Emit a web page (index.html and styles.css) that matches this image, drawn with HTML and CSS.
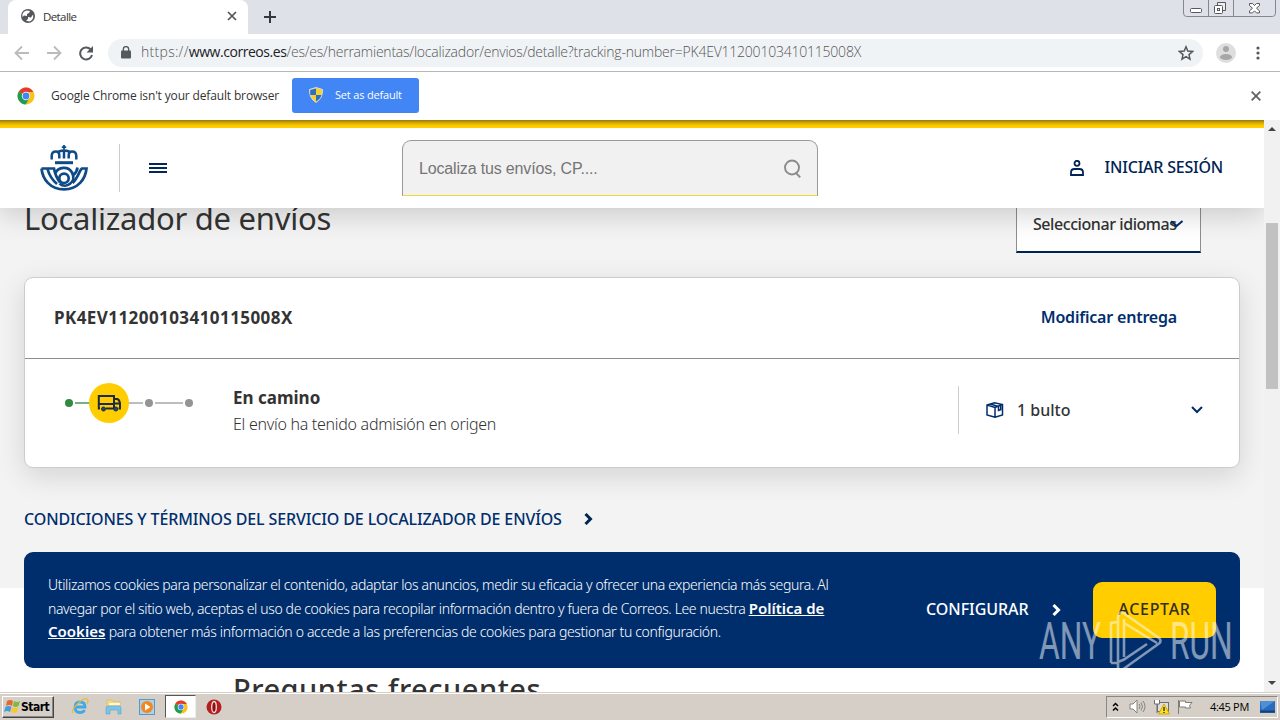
FILE: index.html
```
<!DOCTYPE html>
<html lang="es">
<head>
<meta charset="utf-8">
<title>Detalle</title>
<link rel="stylesheet" href="styles.css">
</head>
<body>
<svg class="defs" width="0" height="0" aria-hidden="true">
  <symbol id="chrome" viewBox="0 0 18 18">
    <circle cx="9" cy="9" r="8.5" fill="#fbc116"/>
    <path d="M9 9 1.7 4.7A8.5 8.5 0 0 1 16.4 5H9z" fill="#e33b2e"/>
    <path d="M9 9 1.7 4.7A8.5 8.5 0 0 0 8.6 17.5L12.6 11z" fill="#1e9e55"/>
    <circle cx="9" cy="9" r="4.2" fill="#fff"/><circle cx="9" cy="9" r="3.4" fill="#4285f4"/>
  </symbol>
</svg>
<div class="screen">
  <div class="tabstrip">
    <div class="tab">
      <svg width="14" height="14" viewBox="0 0 14 14"><circle cx="7" cy="7" r="7" fill="#54575b"/><path d="M6 1.500 9 2 8 4 6 5v2L3 6.500 1.500 8C1 4 3 2 6 1.500zM7 8l3 .5 2-3c1 4-1 6.500-4 7l-3-1 2-1.500z" fill="#fff"/></svg>
      <span class="tab-title">Detalle</span>
      <svg width="10" height="10" viewBox="0 0 10 10"><path d="M1 1l8 8M9 1 1 9" stroke="#505357" stroke-width="1.7"/></svg>
    </div>
    <svg class="newtab" width="12" height="12" viewBox="0 0 12 12"><path d="M6 0v12M0 6h12" stroke="#34373b" stroke-width="2"/></svg>
    <svg class="winctl" width="94" height="18" viewBox="0 0 94 18" fill="none" stroke="#83878f"><path d="M.5 0v13q0 3.500 3 3.500h86q3 0 3-3.500V0M25.500 0v16M50.500 0v16"/><g stroke="#55595f"><rect x="7.500" y="8.500" width="11" height="4" rx="1" fill="#fff"/><path d="M34.500 5V2.500h8v8H40" fill="#eee"/><rect x="31.500" y="5.500" width="8" height="8" rx="1" fill="#fff"/><rect x="34.500" y="8.500" width="2" height="2"/><path d="M66.500 3.500h3l2 2 2-2h3v2l-3 2.700 3 2.700v2h-3l-2-2-2 2h-3v-2l3-2.700-3-2.700z" fill="#fff"/></g></svg>
  </div>
  <div class="toolbar">
    <svg class="nav" width="80" height="16" viewBox="0 0 80 16" fill="none" stroke-width="1.8"><path d="M15 8H1.500M8 1.500 1.500 8 8 14.500M33 8h13.500M40 1.500 46.500 8 40 14.500" stroke="#b9bbbd"/><path d="M76.500 4.200A6 6 0 1 0 78 10" stroke="#55585c" stroke-width="2"/><path d="M79 1v6.500H72.500z" fill="#55585c"/></svg>
    <div class="omnibox">
      <svg width="10" height="13" viewBox="0 0 10 13"><rect x="0" y="4.500" width="10" height="8" rx="1" fill="#55585c"/><path d="M2.300 5V3.300a2.700 2.700 0 0 1 5.400 0V5" fill="none" stroke="#55585c" stroke-width="1.400"/></svg>
      <span class="url"><span class="scheme">https://</span><b>www.correos.es</b><span class="path">/es/es/herramientas/localizador/envios/detalle?tracking-number=PK4EV11200103410115008X</span></span>
      <svg class="star" width="16" height="16" viewBox="0 0 16 16"><path d="M8 1.800l1.800 4.300 4.700.4L11 9.600l1 4.600-4-2.500-4 2.500 1-4.600L1.500 6.500l4.700-.4z" fill="none" stroke="#55585c" stroke-width="1.500"/></svg>
    </div>
    <svg class="avatar" width="20" height="20" viewBox="0 0 20 20"><circle cx="10" cy="10" r="10" fill="#dedede"/><circle cx="10" cy="6" r="3" fill="#a7a7a7"/><ellipse cx="10" cy="14" rx="6" ry="3" fill="#a7a7a7"/></svg>
    <svg class="dots" width="4" height="14" viewBox="0 0 4 14" fill="#55585c"><circle cx="2" cy="2" r="1.600"/><circle cx="2" cy="7" r="1.600"/><circle cx="2" cy="12" r="1.600"/></svg>
  </div>
  <div class="infobar">
    <svg width="18" height="18"><use href="#chrome"/></svg>
    <span class="info-text">Google Chrome isn't your default browser</span>
    <div class="setdef">
      <svg width="14" height="16" viewBox="0 0 14 16"><path d="M7 .5 13.500 2.500Q14 11 7 15.500Q0 11 .5 2.500z" fill="#f8d12f" stroke="#d8dbe0"/><path d="M7 1.500V8H1.300Q1 5 1.300 3zM7 8h5.500Q11 12.500 7 14.500z" fill="#2d6fc4"/></svg>
      <span>Set as default</span>
    </div>
    <svg class="info-x" width="10" height="10" viewBox="0 0 10 10"><path d="M.7.700l8.600 8.600M9.300.700.7 9.300" stroke="#606366" stroke-width="1.800"/></svg>
  </div>
  <div class="viewport">
    <main class="page">
      <header class="header">
        <svg class="logo" width="48" height="46" viewBox="0 0 48 46" fill="none" stroke="#0e4a86"><path d="M24 0v4.500M21.800 2.200h4.400" stroke-width="1.800"/><path d="M11.700 14.500V11q0-4.500 4.300-4.500 3.300 0 3.300 4v3M36.300 14.500V11q0-4.500-4.300-4.500-3.300 0-3.300 4v3M18 8q1-2.500 6-2.500t6 2.500M24 4.500v9" stroke-width="2.500"/><path d="M15 17.700h18" stroke-width="3"/><path d="M1.500 23.500h12.500C15 29 17 33.500 20 37.500M1.500 23.500C2.500 34 10 44.300 24 44.300S45.500 34 46.500 23.500h-4.500C39.500 25 38 33 32.500 38M7.500 24Q10 33 17 39" stroke-width="2.700"/><path d="M15.500 28C18 22 28 20.500 32 27.500 37 37 26 44.500 19.500 38.500M33.500 30Q37 27 37.500 22.500" stroke-width="2.700"/><circle cx="24" cy="33.300" r="4.700" stroke-width="2.700"/></svg>
        <span class="vline"></span>
        <span class="burger"></span>
        <div class="search"><span>Localiza tus envíos, CP....</span><svg width="18" height="20" viewBox="0 0 18 20" fill="none" stroke="#8b8b8b" stroke-width="1.900"><circle cx="8" cy="8.500" r="7"/><path d="M11.500 13.500l4.700 4.800"/></svg></div>
        <div class="login"><svg width="14" height="16" viewBox="0 0 14 16" fill="none" stroke="#002453" stroke-width="1.800"><circle cx="7" cy="3.300" r="2.500"/><path d="M1 15v-2.500q0-3.500 3.500-3.500h5q3.500 0 3.500 3.500V15z"/></svg><span>INICIAR SESIÓN</span></div>
      </header>
      <section class="locator">
        <div class="title-row"><h1>Localizador de envíos</h1><div class="lang"><span>Seleccionar idiomas</span><svg width="14" height="8" viewBox="0 0 14 8"><path d="M1 1.500Q4 3 6.500 6L12.500 1" fill="none" stroke="#002e6d" stroke-width="2"/></svg></div></div>
        <article class="card">
          <div class="card-head"><strong class="code">PK4EV11200103410115008X</strong><span class="modify">Modificar entrega</span></div>
          <div class="card-body">
            <svg class="steps" width="130" height="40" viewBox="0 0 130 40"><path d="M11 20h15" stroke="#72b283" stroke-width="2"/><path d="M64 20h15M91 20h28" stroke="#bdbdbd" stroke-width="2"/><circle cx="5" cy="20" r="4" fill="#2f8b3d"/><circle cx="45" cy="20" r="20" fill="#ffcd00"/><circle cx="85" cy="20" r="4" fill="#949494"/><circle cx="125" cy="20" r="4" fill="#949494"/><g fill="none" stroke="#1c2a42" stroke-width="2"><path d="M36 25.500h-1.200V13H50v12.500H42M50 16h3.500q2 1 2.500 4v5.500h-1.500M50 20.500h6M35 21h15"/></g><circle cx="39.500" cy="26" r="2" fill="#1c4685" stroke="#1c2a42"/><circle cx="51.800" cy="26" r="2" fill="#1c4685" stroke="#1c2a42"/></svg>
            <div class="status"><strong>En camino</strong><span>El envío ha tenido admisión en origen</span></div>
            <div class="parcel"><svg width="18" height="16" viewBox="0 0 18 16" fill="none" stroke="#002e6d" stroke-width="1.500"><path d="M1 3 8.500.8 16.500 2.500v10.500L9 15.200 1 13zM1 3 9 5.500l7.500-3M9 5.500V15M4.500 2 12.500 4.500v4l2.200-.8V4"/></svg><span>1 bulto</span><svg class="chev" width="12" height="8" viewBox="0 0 12 8"><path d="M1 1l5 5 5-5" fill="none" stroke="#002e6d" stroke-width="2"/></svg></div>
          </div>
        </article>
        <a class="terms"><span>CONDICIONES Y TÉRMINOS DEL SERVICIO DE LOCALIZADOR DE ENVÍOS</span><svg width="9" height="12" viewBox="0 0 9 12"><path d="M1.500 1 6.500 6l-5 5" fill="none" stroke="#002453" stroke-width="3"/></svg></a>
      </section>
      <section class="faq"><h2>Preguntas frecuentes</h2></section>
      <aside class="cookies">
        <p><span class="line1">Utilizamos cookies para personalizar el contenido, adaptar los anuncios, medir su eficacia y ofrecer una experiencia más segura. Al</span><br><span class="line2">navegar por el sitio web, aceptas el uso de cookies para recopilar información dentro y fuera de Correos. Lee nuestra <b>Política de</b></span><br><span class="line3"><b>Cookies</b> para obtener más información o accede a las preferencias de cookies para gestionar tu configuración.</span></p>
        <div class="config"><span>CONFIGURAR</span><svg width="9" height="12" viewBox="0 0 9 12"><path d="M1.500 1 6.500 6l-5 5" fill="none" stroke="#fff" stroke-width="3"/></svg></div>
        <div class="accept">ACEPTAR</div>
      </aside>
    </main>
    <div class="scrollbar"><i class="up"></i><i class="thumb"></i><i class="down"></i></div>
    <div class="watermark"><span>ANY</span><svg width="56" height="62" viewBox="0 0 56 62" fill="none" stroke="#fff" stroke-width="2.600"><path d="M10 50V7q0-4 4-6L51 27q3 3 0 5.500L14 59q-4 2-4-3v-5l6-2.500L39 33M3 52V12l7-1M3 52l7 0M16 46V12l33 20M16 12v-4"/></svg><span>RUN</span></div>
  </div>
  <footer class="taskbar">
    <div class="start"><svg width="17" height="16" viewBox="0 0 17 16"><path d="M3 2q3-2 6 0L8 7q-3-2-6 0z" fill="#e8672c"/><path d="M10 2q3 2 6 0l-1.500 5q-3 2-5.500 0z" fill="#7fb943"/><path d="M1.500 8q3-2 6 0L6 13q-3-2-6 0z" fill="#3f9de0"/><path d="M8.500 8q3 2 6 0L13 13q-3 2-6 0z" fill="#fbc72f"/></svg><b>Start</b></div>
    <svg class="ie" width="18" height="17" viewBox="0 0 18 17" fill="none"><path d="M4 9h10q0-5-5-5T4 9.500Q4 14.500 9 14.500q3.500 0 4.500-2.500" stroke="#42a9e4" stroke-width="2.800"/><path d="M2 15C-1 12 12-1 16 1q2 1 0 5" stroke="#e5bd3f" stroke-width="1.300"/></svg>
    <svg class="folder" width="17" height="16" viewBox="0 0 17 16"><path d="M2 1h5l1 1.500h7V9H2z" fill="#f2d881" stroke="#d9b95c" stroke-width=".6"/><path d="M4 5h11" stroke="#fff" stroke-width="1.500"/><path d="M1 15V9q0-2 2-2h11q2 0 2 2v6h-3v-4H5v4z" fill="#7cc3e6" stroke="#5aa5cc" stroke-width=".6"/></svg>
    <svg class="media" width="16" height="16" viewBox="0 0 16 16"><rect x=".5" y=".5" width="15" height="15" fill="#a9d2ef" stroke="#5c96c4"/><circle cx="8" cy="8" r="6" fill="#f3871e"/><path d="M6 4.500 11.500 8 6 11.500z" fill="#fff"/></svg>
    <div class="task-active"><svg width="14" height="14"><use href="#chrome"/></svg></div>
    <svg class="opera" width="16" height="16" viewBox="0 0 16 16"><circle cx="8" cy="8" r="7.500" fill="#b51e1f"/><ellipse cx="8" cy="8" rx="2.300" ry="5.500" fill="#8e1012" stroke="#f2e3e0" stroke-width="1.300"/></svg>
    <div class="tray">
      <svg width="7" height="10" viewBox="0 0 7 10"><path d="M1 4 3.500 1.500 6 4M1 8.500 3.500 6 6 8.500" fill="none" stroke="#000" stroke-width="1.500"/></svg>
      <svg class="vol" width="17" height="15" viewBox="0 0 17 15" fill="none" stroke="#85847f"><path d="M1 5h3l4-4v13l-4-4H1z" fill="#fff"/><path d="M10 5q2 2.500 0 5M12 3.500q3 4 0 8M14 2q4 5.500 0 11"/></svg>
      <svg class="net" width="17" height="16" viewBox="0 0 17 16"><rect x="4.500" y="3.500" width="11" height="9" fill="#ddd" stroke="#6f6e6a"/><path d="M1.500 1v4h5V1M4 5v9" fill="#fff" stroke="#6f6e6a"/><path d="M11 5l5.500 10h-11z" fill="#ffdf20" stroke="#d7a900"/><path d="M11 8v4M11 13v1" stroke="#222" stroke-width="1.300"/></svg>
      <svg class="flag" width="17" height="15" viewBox="0 0 17 15"><path d="M1.500 15V1M2.500 2h6v1.500H15l-2.500 3 1 2.500H8.500V8h-6z" fill="#fff" stroke="#7d7c77"/></svg>
      <span class="clock">4:45 PM</span>
      <svg class="desk" width="15" height="12" viewBox="0 0 15 12"><rect width="15" height="12" fill="#286abc"/><path d="M0 0h15L2 9z" fill="#4e8fd6"/><path d="M0 10.500h15" stroke="#173f7c" stroke-width="2"/></svg>
    </div>
  </footer>
</div>
</body>
</html>
```
FILE: styles.css
```
* { box-sizing: border-box; }
body { margin: 0; overflow: hidden; font-family: "Noto Sans", "Open Sans", sans-serif; color: #333; }
svg { flex: none; display: block; }
.defs { position: absolute; }
.screen { width: 1280px; height: 720px; display: flex; flex-direction: column; overflow: hidden; background: #fff; white-space: nowrap; font-variant-ligatures: none; }

.tabstrip { height: 34px; flex: none; display: flex; background: #dee1e8; padding-left: 8px; }
.tab { width: 240px; display: flex; align-items: center; padding: 0 11px 2px 13px; background: #fff; border-radius: 8px 8px 0 0; }
.tab-title { flex: 1; margin-left: 8px; font: 11.500px "Open Sans", sans-serif; letter-spacing: -.6px; }
.newtab { margin: 11px 0 0 16px; }
.winctl { margin-left: auto; margin-right: 3px; }
.toolbar { height: 38px; flex: none; display: flex; align-items: center; padding-left: 14px; border-bottom: 1px solid #b6b6b6; }
.omnibox { width: 1095px; height: 28px; margin-left: 14px; display: flex; align-items: center; padding: 0 9px 0 13px; background: #f0f3f6; border-radius: 14px; }
.url { margin: -2px 0 0 10px; font: 300 14px "Open Sans", sans-serif; color: #555; }
.url b { font-weight: 400; color: #202124; letter-spacing: -.45px; }
.scheme { letter-spacing: .3px; }
.path { letter-spacing: -.22px; }
.star { margin-left: auto; }
.avatar { margin-left: 13px; }
.dots { margin-left: 20px; }
.infobar { height: 48px; flex: none; display: flex; align-items: center; padding: 0 19px 0 17px; background: #fff; }
.info-text { width: 229px; margin: -2px 12px 0 16px; font: 12px "Open Sans", sans-serif; letter-spacing: -.15px; }
.setdef { width: 127px; height: 35px; display: flex; align-items: center; gap: 12px; padding: 0 0 2px 17px; margin-top: -1px; border-radius: 3px; background: #4285f4; color: #fff; font: 11px "Open Sans", sans-serif; letter-spacing: -.18px; }
.info-x { margin-left: auto; }

.viewport { height: 572px; flex: none; display: flex; position: relative; overflow: hidden; }
.page { width: 1264px; height: 572px; position: relative; overflow: hidden; background: #fff; }
.header { position: relative; z-index: 2; height: 88px; display: flex; align-items: center; padding: 8px 41px 0 40px; background: linear-gradient(#967711, #d9ac00 3px, #ffcd00 6px, #ffcd00 8px, #fff 8px); box-shadow: 0 4px 30px rgba(0,0,0,.2); }
.vline { width: 1px; height: 48px; background: #ccc; margin-left: 31px; }
.burger { width: 18px; height: 10px; margin-left: 29px; border-top: 2px solid #00285c; border-bottom: 2px solid #00285c; background: linear-gradient(transparent 2px, #00285c 2px, #00285c 4px, transparent 4px); }
.search { width: 416px; height: 56px; margin-left: 235px; display: flex; align-items: center; justify-content: space-between; padding: 2px 15px 0 16px; background: #f1f1f1; border: 1px solid #999; border-bottom-color: #f0d832; border-radius: 9px 9px 0 0; font: 16px "Liberation Sans", sans-serif; letter-spacing: -.16px; color: #757575; }
.login { margin-left: auto; display: flex; align-items: center; gap: 21px; font-size: 16px; font-weight: 500; color: #002453; letter-spacing: -.22px; }
.login span { margin-top: -2px; }
.locator { height: 380px; padding: 0 24px; background: #f3f3f3; }
.title-row { height: 69px; display: flex; justify-content: space-between; }
h1 { margin: -11px 0 0; font-size: 31px; line-height: 42px; font-weight: 400; letter-spacing: -.26px; }
.lang { width: 185px; height: 59px; margin: -14px 39px 0 0; padding: 18px 0 16px 16px; display: flex; align-items: center; background: #fff; border: 1px solid #8e8e8e; border-bottom: 2px solid #002453; font-size: 16px; font-weight: 500; letter-spacing: -.43px; }
.lang svg { margin-left: -7px; }
.card { height: 191px; border: 1px solid #ccc; border-radius: 9px; background: #fff; box-shadow: 0 8px 28px rgba(0,0,0,.13); }
.card-head { height: 81px; display: flex; align-items: center; justify-content: space-between; padding: 0 62px 2px 29px; border-bottom: 1px solid #8e8e8e; }
.code { font-size: 17px; font-weight: 700; letter-spacing: .43px; }
.modify { font-size: 16px; font-weight: 600; color: #002e6d; letter-spacing: -.2px; }
.card-body { display: flex; height: 108px; padding: 24px 36px 0 39px; align-items: flex-start; }
.status { margin: 1px 0 0 39px; display: flex; flex-direction: column; font-size: 16px; line-height: 27px; }
.status strong { font-size: 17px; }
.status span { font-weight: 300; letter-spacing: -.28px; }
.parcel { width: 245px; height: 48px; margin: 3px 0 0 auto; padding-left: 27px; border-left: 1px solid #ccc; display: flex; align-items: center; font-size: 16px; font-weight: 500; }
.parcel span { margin: -1px 0 0 13px; }
.chev { margin-left: auto; }
.terms { display: flex; align-items: center; margin-top: 40px; color: #002e6d; font-size: 16px; line-height: 22px; font-weight: 500; letter-spacing: -.125px; }
.terms svg { margin-left: 22px; }
.faq { padding-left: 233px; }
h2 { margin: 80px 0 0; font-size: 29px; line-height: 42px; font-weight: 500; letter-spacing: .53px; }
.cookies { position: absolute; z-index: 3; left: 24px; top: 432px; width: 1216px; height: 116px; display: flex; align-items: center; padding: 0 24px; border-radius: 9px; background: #002e6d; color: #fff; }
.cookies p { width: 878px; margin: -3px 0 0; font-size: 14px; line-height: 23.400px; font-weight: 300; }
.cookies p b { font-weight: 600; text-decoration: underline; font-size: 15px; letter-spacing: 0; }
.line1 { letter-spacing: -.35px; }
.line2 { letter-spacing: -.37px; }
.line3 { letter-spacing: -.335px; }
.config { display: flex; align-items: center; font-size: 16px; font-weight: 500; letter-spacing: -.05px; }
.config span { margin-top: -2px; }
.config svg { margin-left: 23px; }
.accept { width: 123px; height: 56px; margin-left: auto; display: grid; place-items: center; padding-bottom: 2px; border-radius: 9px; background: #ffcd00; color: #332d22; font-size: 16px; font-weight: 500; letter-spacing: .7px; }
.scrollbar { width: 16px; background: #f1f1f1; display: flex; flex-direction: column; align-items: center; }
.up, .down { border: 4px solid transparent; }
.up { border-bottom-color: #444; border-top: 0; margin-top: 7px; }
.thumb { width: 12px; height: 166px; margin-top: 92px; background: #c1c1c1; }
.down { border-top-color: #444; border-bottom: 0; margin: auto 0 7px; }
.watermark { position: absolute; z-index: 5; left: 1039px; top: 491px; display: flex; align-items: center; opacity: .5; color: #fff; }
.watermark span { font: 400 52px/60px "Roboto", sans-serif; width: 65px; transform: scaleX(.61); transform-origin: left; }
.watermark svg { margin: 0 6px 0 4px; }

.taskbar { height: 28px; flex: none; display: flex; align-items: center; background: #d5cfc8; border-top: 1px solid #d5cfc8; box-shadow: inset 0 1px #fff; padding: 0 2px 0; }
.start { width: 52px; height: 22px; display: flex; align-items: center; padding-left: 1px; border: 1px solid; border-color: #fff #444 #444 #fff; box-shadow: inset -1px -1px #888; color: #000; font: 12px "DejaVu Sans Condensed", sans-serif; letter-spacing: -.5px; }
.ie { margin-left: 17px; }
.folder { margin-left: 16px; }
.media { margin-left: 17px; }
.task-active { width: 31px; height: 23px; margin-left: 10px; display: grid; place-items: center; background: #fff; border: 1px solid; border-color: #555 #eee #eee #555; }
.opera { margin-left: 10px; }
.tray { width: 172px; height: 22px; margin-left: auto; display: flex; align-items: center; padding: 0 2px 0 5px; border: 1px solid; border-color: #888 #fff #fff #888; }
.vol { margin-left: 10px; }
.net { margin-left: 7px; }
.flag { margin-left: 7px; }
.clock { margin-left: auto; font: 11px "Open Sans", sans-serif; letter-spacing: -.3px; color: #000; }
.desk { margin-left: 11px; }
```
